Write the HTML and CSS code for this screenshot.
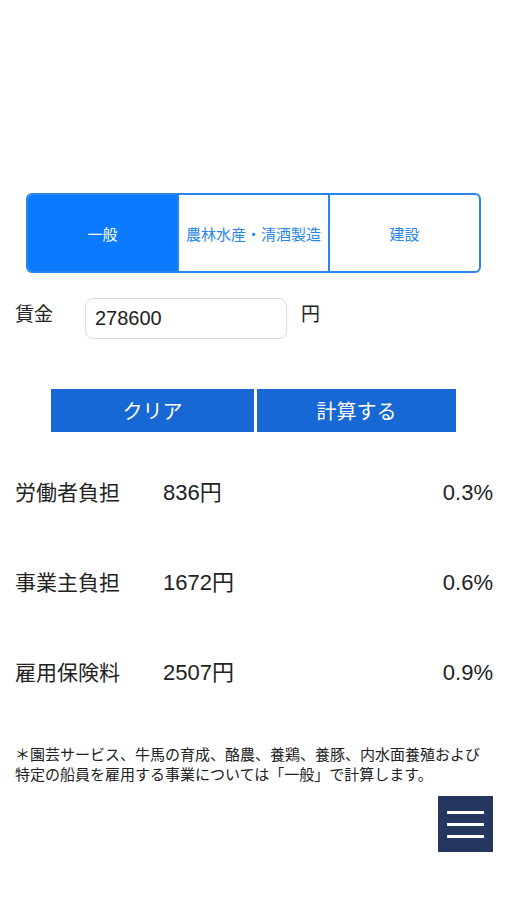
FILE: index.html
```html
<html lang="ja">

<head>
    <title>雇用保険料計算</title>
    <link rel="stylesheet" href="styles.css">
</head>

<body>
    <div class="page">
        <div class="segment">
            <div class="seg active">一般</div>
            <div class="seg">農林水産・清酒製造</div>
            <div class="seg">建設</div>
        </div>
        <div class="wage">
            <label for="wage">賃金</label>
            <input type="text" id="wage" value="278600">
            <span class="yen">円</span>
        </div>
        <div class="buttons">
            <button type="button">クリア</button>
            <button type="button">計算する</button>
        </div>
        <div class="results">
            <div class="result">
                <span class="name">労働者負担</span>
                <span class="amount">836円</span>
                <span class="rate">0.3%</span>
            </div>
            <div class="result">
                <span class="name">事業主負担</span>
                <span class="amount">1672円</span>
                <span class="rate">0.6%</span>
            </div>
            <div class="result">
                <span class="name">雇用保険料</span>
                <span class="amount">2507円</span>
                <span class="rate">0.9%</span>
            </div>
        </div>
        <p class="note">＊園芸サービス、牛馬の育成、酪農、養鶏、養豚、内水面養殖および<br>特定の船員を雇用する事業については「一般」で計算します。</p>
        <div class="menu-row">
            <div class="menu">
                <span></span>
                <span></span>
                <span></span>
            </div>
        </div>
    </div>
</body>

</html>
```

FILE: styles.css
```css
body {
    margin: 0;
    background: white;
    font-family: "Noto Sans CJK JP", "Liberation Sans", sans-serif;
    color: #222;
}

.page {
    padding-top: 193px;
}

.segment {
    display: flex;
    margin: 0 26px;
    height: 80px;
    box-sizing: border-box;
    border: 2px solid #2b86ec;
    border-radius: 6px;
    overflow: hidden;
}

.seg {
    flex: 1;
    display: flex;
    align-items: center;
    justify-content: center;
    font-size: 15px;
    color: #2b86ec;
    border-left: 2px solid #2b86ec;
}

.seg:first-child {
    border-left: none;
}

.seg.active {
    background: #0a7aff;
    color: white;
}

.wage {
    display: flex;
    align-items: flex-start;
    margin-top: 25px;
    padding-left: 15px;
}

.wage label {
    font-size: 19px;
    width: 70px;
    line-height: 30px;
}

.wage input {
    width: 202px;
    height: 41px;
    box-sizing: border-box;
    border: 1px solid #ddd;
    border-radius: 8px;
    padding: 0 9px;
    font-family: "Liberation Sans", sans-serif;
    font-size: 20px;
    color: #222;
}

.yen {
    margin-left: 14px;
    font-size: 19px;
    line-height: 30px;
}

.buttons {
    display: flex;
    gap: 3px;
    margin: 50px 0 0 51px;
}

.buttons button {
    width: 203px;
    height: 43px;
    border: none;
    background: #1767d4;
    color: white;
    font-family: "Noto Sans CJK JP", sans-serif;
    font-size: 20px;
}

.buttons button + button {
    width: 199px;
}

.results {
    margin-top: 14px;
}

.result {
    display: flex;
    align-items: baseline;
    height: 90px;
    box-sizing: border-box;
    padding: 30px 14px 0 15px;
    font-size: 21px;
    line-height: 30px;
}

.name {
    width: 148px;
}

.amount,
.rate {
    font-family: "Liberation Sans", "Noto Sans CJK JP", sans-serif;
    font-size: 22px;
}

.amount {
    flex: 1;
}

.note {
    margin: 28px 0 0;
    padding: 0 15px;
    font-size: 15px;
    line-height: 20px;
}

.menu-row {
    display: flex;
    justify-content: flex-end;
    padding-right: 14px;
    margin-top: 12px;
}

.menu {
    width: 55px;
    height: 56px;
    background: #26375f;
    display: flex;
    flex-direction: column;
    justify-content: center;
    align-items: center;
    gap: 9px;
}

.menu span {
    width: 37px;
    height: 3px;
    background: white;
}
```
